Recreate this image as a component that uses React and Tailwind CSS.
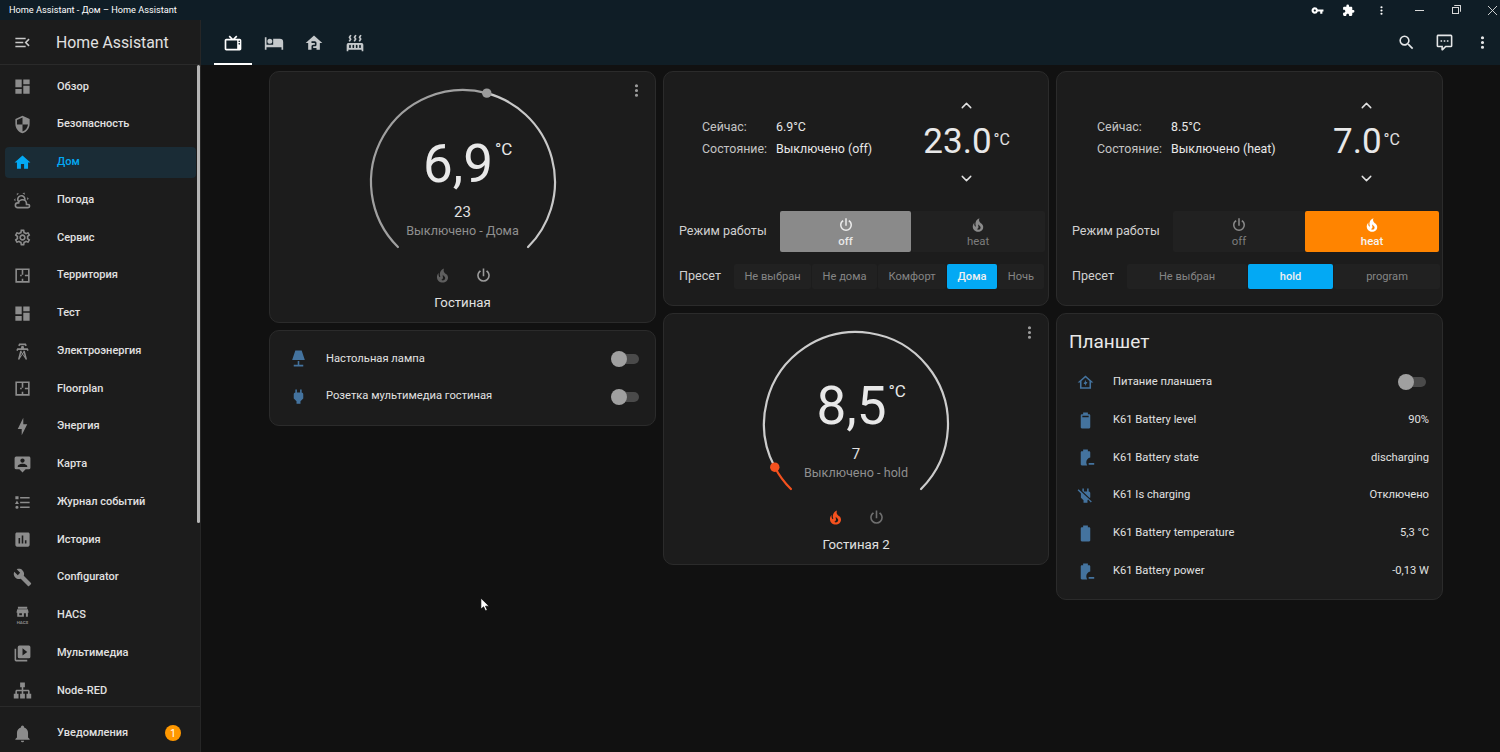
import { ChevronUp, ChevronDown } from "lucide-react";
import { MdOutlineSettings, MdVpnKey } from "react-icons/md";

const paths = {
  menuOpen: "M21,15.61L19.59,17L14.58,12L19.59,7L21,8.39L17.44,12L21,15.61M3,6H16V8H3V6M3,13V11H13V13H3M3,18V16H16V18H3Z",
  dashboard: "M13,3V9H21V3M13,21H21V11H13M3,21H11V15H3M3,13H11V3H3V13Z",
  security: "M12,12H19C18.47,16.11 15.72,19.78 12,20.92V12H5V6.3L12,3.19M12,1L3,5V11C3,16.55 6.84,21.73 12,23C17.16,21.73 21,16.55 21,11V5L12,1Z",
  home: "M10,20V14H14V20H19V12H22L12,3L2,12H5V20H10Z",
  weather: "M12.74,5.47C15.1,6.5 16.35,9.03 15.92,11.46C17.19,12.56 18,14.19 18,16V16.17C18.31,16.06 18.65,16 19,16A3,3 0 0,1 22,19A3,3 0 0,1 19,22H6A4,4 0 0,1 2,18A4,4 0 0,1 6,14H6.27C5,12.45 4.6,10.24 5.5,8.26C6.72,5.5 9.97,4.24 12.74,5.47M11.93,7.3C10.16,6.5 8.09,7.31 7.31,9.07C6.85,10.09 6.93,11.22 7.41,12.13C8.5,10.83 10.16,10 12,10C12.7,10 13.38,10.12 14,10.34C13.94,9.06 13.18,7.86 11.93,7.3M13.55,3.64C13,3.4 12.45,3.23 11.88,3.12L14.37,1.82L15.27,4.71C14.76,4.29 14.19,3.93 13.55,3.64M6.09,4.44C5.6,4.79 5.17,5.19 4.8,5.63L4.91,2.82L7.87,3.5C7.25,3.71 6.65,4.03 6.09,4.44M18,9.71C17.91,9.12 17.78,8.55 17.59,8L19.97,9.5L17.92,11.73C18.03,11.08 18.05,10.4 18,9.71M3.04,11.3C3.11,11.9 3.24,12.47 3.43,13L1.06,11.5L3.1,9.28C3,9.93 2.97,10.61 3.04,11.3M19,18H16V16A4,4 0 0,0 12,12A4,4 0 0,0 8,16H6A2,2 0 0,0 4,18A2,2 0 0,0 6,20H19A1,1 0 0,0 20,19A1,1 0 0,0 19,18Z",
  floorplan: "M3,3H21V21H3V3M5,5V19H11V16H13V19H19V13H15V11H19V5H13V11H11V13H9V11H11V5H5Z",
  tower: "M8.28,5.45L6.5,4.55L7.76,2H16.23L17.5,4.55L15.72,5.44L15,4H9L8.28,5.45M18.62,8H14.09L13.3,5H10.7L9.91,8H5.38L4.1,10.55L5.89,11.44L6.62,10H17.38L18.1,11.45L19.89,10.56L18.62,8M17.77,22H15.7L15.46,21.1L12,15.9L8.53,21.1L8.3,22H6.23L9.12,11H11.19L10.83,12.35L12,14.1L13.16,12.35L12.81,11H14.88L17.77,22M11.4,15L10.5,13.65L9.32,18.13L11.4,15M14.68,18.12L13.5,13.64L12.6,15L14.68,18.12Z",
  bolt: "M11,15H6L13,1V9H18L11,23V15Z",
  tooltip: "M20,2H4A2,2 0 0,0 2,4V16A2,2 0 0,0 4,18H8L12,22L16,18H20A2,2 0 0,0 22,16V4C22,2.89 21.1,2 20,2M12,4.3C13.5,4.3 14.7,5.5 14.7,7C14.7,8.5 13.5,9.7 12,9.7C10.5,9.7 9.3,8.5 9.3,7C9.3,5.5 10.5,4.3 12,4.3M18,15H6V14.1C6,12.1 10,11 12,11C14,11 18,12.1 18,14.1V15Z",
  list: "M5,9.5L7.5,14H2.5L5,9.5M3,4H7V8H3V4M5,20A2,2 0 0,0 7,18A2,2 0 0,0 5,16A2,2 0 0,0 3,18A2,2 0 0,0 5,20M9,5V7H21V5H9M9,19H21V17H9V19M9,13H21V11H9V13Z",
  chart: "M9,17H7V10H9V17M13,17H11V7H13V17M17,17H15V13H17V17M19,3H5C3.9,3 3,3.9 3,5V19C3,20.1 3.9,21 5,21H19C20.1,21 21,20.1 21,19V5C21,3.9 20.1,3 19,3Z",
  wrench: "M22.7,19L13.6,9.9C14.5,7.6 14,4.9 12.1,3C10.1,1 7.1,0.6 4.7,1.7L9,6L6,9L1.6,4.7C0.4,7.1 0.9,10.1 2.9,12.1C4.8,14 7.5,14.5 9.8,13.6L18.9,22.7C19.3,23.1 19.9,23.1 20.3,22.7L22.6,20.4C23.1,20 23.1,19.3 22.7,19Z",
  store: "M5,1H19V4H5V1M4,5H20L21,9V10H20V16H4V10H3V9L4,5M7,11V14H11V11H7M14,11V16H17V11H14Z",
  media: "M4,6H2V20A2,2 0 0,0 4,22H18V20H4V6M20,2H8A2,2 0 0,0 6,4V16A2,2 0 0,0 8,18H20A2,2 0 0,0 22,16V4A2,2 0 0,0 20,2M12,14.5V5.5L18,10L12,14.5Z",
  sitemap: "M9,2V8H11V11H5C3.89,11 3,11.89 3,13V16H1V22H7V16H5V13H11V16H9V22H15V16H13V13H19V16H17V22H23V16H21V13C21,11.89 20.11,11 19,11H13V8H15V2H9Z",
  bell: "M21,19V20H3V19L5,17V11C5,7.9 7.03,5.17 10,4.29C10,4.19 10,4.1 10,4A2,2 0 0,1 12,2A2,2 0 0,1 14,4C14,4.1 14,4.19 14,4.29C16.97,5.17 19,7.9 19,11V17L21,19M14,21A2,2 0 0,1 12,23A2,2 0 0,1 10,21",
  tv: "M8.16,3L6.75,4.41L9.34,7H4C2.89,7 2,7.89 2,9V19C2,20.11 2.89,21 4,21H20C21.11,21 22,20.11 22,19V9C22,7.89 21.11,7 20,7H14.66L17.25,4.41L15.84,3L12,6.84L8.16,3M4,9H17V19H4V9M19.5,9A1,1 0 0,1 20.5,10A1,1 0 0,1 19.5,11A1,1 0 0,1 18.5,10A1,1 0 0,1 19.5,9M19.5,12A1,1 0 0,1 20.5,13A1,1 0 0,1 19.5,14A1,1 0 0,1 18.5,13A1,1 0 0,1 19.5,12Z",
  bed: "M19,7H11V14H3V5H1V20H3V17H21V20H23V11A4,4 0 0,0 19,7M7,13A3,3 0 0,0 10,10A3,3 0 0,0 7,7A3,3 0 0,0 4,10A3,3 0 0,0 7,13Z",
  homeFloor: "M12,3L2,12H5V20H19V12H22L12,3M9,10H13C14.1,10 15,10.9 15,12V14C15,15.1 14.1,16 13,16H11V18H15V20H9V16C9,14.9 9.9,14 11,14H13V12H9V10Z",
  radiator: "M7.95,3L6.53,5.19L7.95,7.4H7.94L5.95,10.5L4.22,9.6L5.64,7.39L4.22,5.19L6.22,2.09L7.95,3M13.95,2.89L12.53,5.1L13.95,7.3L13.94,7.31L11.95,10.4L10.22,9.5L11.64,7.3L10.22,5.1L12.22,2L13.95,2.89M20,2.89L18.56,5.1L20,7.3V7.31L18,10.4L16.25,9.5L17.67,7.3L16.25,5.1L18.25,2L20,2.89M2,22V14A2,2 0 0,1 4,12H20A2,2 0 0,1 22,14V22H20V20H4V22H2M6,14A1,1 0 0,0 5,15V17A1,1 0 0,0 6,18A1,1 0 0,0 7,17V15A1,1 0 0,0 6,14M10,14A1,1 0 0,0 9,15V17A1,1 0 0,0 10,18A1,1 0 0,0 11,17V15A1,1 0 0,0 10,14M14,14A1,1 0 0,0 13,15V17A1,1 0 0,0 14,18A1,1 0 0,0 15,17V15A1,1 0 0,0 14,14M18,14A1,1 0 0,0 17,15V17A1,1 0 0,0 18,18A1,1 0 0,0 19,17V15A1,1 0 0,0 18,14Z",
  search: "M9.5,3A6.5,6.5 0 0,1 16,9.5C16,11.11 15.41,12.59 14.44,13.73L14.71,14H15.5L20.5,19L19,20.5L14,15.5V14.71L13.73,14.44C12.59,15.41 11.11,16 9.5,16A6.5,6.5 0 0,1 3,9.5A6.5,6.5 0 0,1 9.5,3M9.5,5C7,5 5,7 5,9.5C5,12 7,14 9.5,14C12,14 14,12 14,9.5C14,7 12,5 9.5,5Z",
  comment: "M9,22A1,1 0 0,1 8,21V18H4A2,2 0 0,1 2,16V4C2,2.89 2.9,2 4,2H20A2,2 0 0,1 22,4V16A2,2 0 0,1 20,18H13.9L10.2,21.71C10,21.9 9.75,22 9.5,22H9M10,16V19.08L13.08,16H20V4H4V16H10M17,11H15V9H17V11M13,11H11V9H13V11M9,11H7V9H9V11Z",
  dots: "M12,16A2,2 0 0,1 14,18A2,2 0 0,1 12,20A2,2 0 0,1 10,18A2,2 0 0,1 12,16M12,10A2,2 0 0,1 14,12A2,2 0 0,1 12,14A2,2 0 0,1 10,12A2,2 0 0,1 12,10M12,4A2,2 0 0,1 14,6A2,2 0 0,1 12,8A2,2 0 0,1 10,6A2,2 0 0,1 12,4Z",
  fire: "M17.66,11.2C17.43,10.9 17.15,10.64 16.89,10.38C16.22,9.78 15.46,9.35 14.82,8.72C13.33,7.26 13,4.85 13.95,3C13,3.23 12.17,3.75 11.46,4.32C8.87,6.4 7.85,10.07 9.07,13.22C9.11,13.32 9.15,13.42 9.15,13.55C9.15,13.77 9,13.97 8.8,14.05C8.57,14.15 8.33,14.09 8.14,13.93C8.08,13.88 8.04,13.83 8,13.76C6.87,12.33 6.69,10.28 7.45,8.64C5.78,10 4.87,12.3 5,14.47C5.06,14.97 5.12,15.47 5.29,15.97C5.43,16.57 5.7,17.17 6,17.7C7.08,19.43 8.95,20.67 10.96,20.92C13.1,21.19 15.39,20.8 17.03,19.32C18.86,17.66 19.5,15 18.56,12.72L18.43,12.46C18.22,12 17.66,11.2 17.66,11.2M14.5,17.5C14.22,17.74 13.76,18 13.4,18.1C12.28,18.5 11.16,17.94 10.5,17.28C11.69,17 12.4,16.12 12.61,15.23C12.78,14.43 12.46,13.77 12.33,13C12.21,12.26 12.23,11.63 12.5,10.94C12.69,11.32 12.89,11.7 13.13,12C13.9,13 15.11,13.44 15.37,14.8C15.41,14.94 15.43,15.08 15.43,15.23C15.46,16.05 15.1,16.95 14.5,17.5Z",
  power: "M16.56,5.44L15.11,6.89C16.84,7.94 18,9.83 18,12A6,6 0 0,1 12,18A6,6 0 0,1 6,12C6,9.83 7.16,7.94 8.88,6.88L7.44,5.44C5.36,6.88 4,9.28 4,12A8,8 0 0,0 12,20A8,8 0 0,0 20,12C20,9.28 18.64,6.88 16.56,5.44M13,3H11V13H13",
  lamp: "M8,2H16L20,14H4L8,2M11,15H13V20H18V22H6V20H11V15Z",
  plug: "M16,7V3H14V7H10V3H8V7C7,7 6,8 6,9V14.5L9.5,18V21H14.5V18L18,14.5V9C18,8 17,7 16,7Z",
  plugOff: "M8,3V6.18L17.2,15.3L18,14.4V8.8C18,7.68 16.7,7 16,7V3H14V7H10V3H8M3.28,4L2,5.28L6.2,9.5V14.8L9.5,18V21H14.5V18L15.3,17.2L18.72,20.72L20,19.45L3.28,4Z",
  battery90: "M16.67,4H15V2H9V4H7.33A1.33,1.33 0 0,0 6,5.33V20.67C6,21.4 6.6,22 7.33,22H16.67A1.33,1.33 0 0,0 18,20.67V5.33C18,4.6 17.4,4 16.67,4M16,8H8V6H16",
  battery: "M16.67,4H15V2H9V4H7.33A1.33,1.33 0 0,0 6,5.33V20.66C6,21.4 6.6,22 7.33,22H16.67C17.4,22 18,21.4 18,20.67V5.33C18,4.6 17.4,4 16.67,4Z",
  batteryMinus: "M6,5.33C6,4.6 6.6,4 7.33,4H9V2H15V4H16.67C17.4,4 18,4.6 18,5.33V12C15.2,12.5 13,15 13,18C13,19.6 13.5,21 14.2,22H7.33C6.6,22 6,21.4 6,20.67V5.33M16,19H23V21H16V19Z",
  homeBolt: "M12,3L2,12H5V20H19V12H22L12,3M7,18V10.2L12,5.7L17,10.2V18H7M12.5,8.5L9.5,14H11.5V16.5L14.5,11.5H12.5V8.5Z",
  puzzle: "M20.5,11H19V7C19,5.89 18.1,5 17,5H13V3.5A2.5,2.5 0 0,0 10.5,1A2.5,2.5 0 0,0 8,3.5V5H4A2,2 0 0,0 2,7V10.8H3.5C5,10.8 6.2,12 6.2,13.5C6.2,15 5,16.2 3.5,16.2H2V20A2,2 0 0,0 4,22H7.8V20.5C7.8,19 9,17.8 10.5,17.8C12,17.8 13.2,19 13.2,20.5V22H17A2,2 0 0,0 19,20V16H20.5A2.5,2.5 0 0,0 23,13.5A2.5,2.5 0 0,0 20.5,11Z",
};

const Mdi = ({ name, className = "size-[19px]" }) => (
  <svg viewBox="0 0 24 24" fill="currentColor" fillRule="evenodd" className={`shrink-0 ${className}`}>
    <path d={paths[name]} />
  </svg>
);

const HacsIcon = () => (
  <svg viewBox="0 0 24 24" fill="currentColor" className="size-[19px] shrink-0">
    <path d={paths.store} transform="translate(2 0) scale(0.84)" />
    <text x="12" y="22.5" textAnchor="middle" fontSize="5.5" fontWeight="700" fontFamily="Roboto">
      HACS
    </text>
  </svg>
);

const navItems = [
  { icon: "dashboard", label: "Обзор" },
  { icon: "security", label: "Безопасность" },
  { icon: "home", label: "Дом", active: true },
  { icon: "weather", label: "Погода" },
  { icon: "cog", label: "Сервис" },
  { icon: "floorplan", label: "Территория" },
  { icon: "dashboard", label: "Тест" },
  { icon: "tower", label: "Электроэнергия" },
  { icon: "floorplan", label: "Floorplan" },
  { icon: "bolt", label: "Энергия" },
  { icon: "tooltip", label: "Карта" },
  { icon: "list", label: "Журнал событий" },
  { icon: "chart", label: "История" },
  { icon: "wrench", label: "Configurator" },
  { icon: "hacs", label: "HACS" },
  { icon: "media", label: "Мультимедиа" },
  { icon: "sitemap", label: "Node-RED" },
];

const NavRow = ({ icon, label, active }) => (
  <div className="flex h-[37.75px] items-center">
    <div
      className={`ml-[5px] flex h-[31px] w-[191px] items-center rounded-[4px] pl-[7.5px] ${
        active ? "bg-[#1a2c36] text-[#03a9f4]" : "text-[#8c8c8c]"
      }`}
    >
      {icon === "cog" ? (
        <MdOutlineSettings className="size-[19px] shrink-0" />
      ) : icon === "hacs" ? (
        <HacsIcon />
      ) : (
        <Mdi name={icon} />
      )}
      <span className={`ml-[25.5px] text-[11px] font-medium ${active ? "text-[#03a9f4]" : "text-[#e1e1e1]"}`}>
        {label}
      </span>
    </div>
  </div>
);

const Sidebar = () => (
  <aside className="relative flex w-[201px] shrink-0 flex-col border-r border-[#262626] bg-[#1c1c1c]">
    <div className="flex h-[45px] shrink-0 items-center border-b border-[#2a2a2a] pl-[12.5px] pt-[1px] text-[#c8c8c8]">
      <Mdi name="menuOpen" />
      <span className="ml-[24.5px] text-[15.8px] text-[#e1e1e1]">Home Assistant</span>
    </div>
    <div className="h-[641px] shrink-0 overflow-hidden pt-[3px]">
      {navItems.map((item) => (
        <NavRow key={item.label} {...item} />
      ))}
    </div>
    <div className="flex flex-1 items-center border-t border-[#2a2a2a] pl-[12.5px] pt-[7px] text-[#8c8c8c]">
      <Mdi name="bell" />
      <span className="ml-[25.5px] text-[11px] font-medium text-[#e1e1e1]">Уведомления</span>
      <span className="ml-[37px] flex size-4 items-center justify-center rounded-full bg-[#ff9800] text-[10px] text-white">
        1
      </span>
    </div>
    <div className="absolute left-[197px] top-[45px] h-[458px] w-[3px] rounded-full bg-[#b5b5b5]" />
  </aside>
);

const Card = ({ className = "", children }) => (
  <div className={`relative rounded-[10px] border border-[#2b2b2b] bg-[#1c1c1c] ${className}`}>{children}</div>
);

// arc helpers, angle in degrees clockwise from the top
const point = (angle) => {
  const rad = (angle * Math.PI) / 180;
  return [100 + 92 * Math.sin(rad), 100 - 92 * Math.cos(rad)];
};
const arc = (from, to) => {
  const [x1, y1] = point(from);
  const [x2, y2] = point(to);
  return `M${x1} ${y1}A92 92 0 ${to - from > 180 ? 1 : 0} 1 ${x2} ${y2}`;
};

const Dial = ({ value, target, state, handle, activeColor, restColor, handleColor, fireColor, powerColor, name }) => {
  const [hx, hy] = point(handle);
  return (
    <div className="flex flex-col items-center pt-[10px]">
      <div className="relative h-[170px] w-[200px]">
        <svg viewBox="0 0 200 170" className="h-[170px] w-[200px]" fill="none" strokeLinecap="round">
          <path d={arc(-135, handle)} stroke={activeColor} strokeWidth="2.2" />
          <path d={arc(handle, 135)} stroke={restColor} strokeWidth="2.2" />
          <circle cx={hx} cy={hy} r="4.7" fill={handleColor} />
        </svg>
        <div className="absolute inset-0 flex flex-col items-center pt-[52px]">
          <div className="relative -ml-[9px] text-[53px] leading-[60px] text-[#e8e8e8]">
            {value}
            <span className="absolute left-full top-[5px] ml-[2px] text-[17px] leading-5">°C</span>
          </div>
          <div className="mt-[8px] text-[15px] leading-5 text-[#e1e1e1]">{target}</div>
          <div className="mt-[1px] text-[12.6px] leading-[16px] text-[#8f8f8f]">{state}</div>
        </div>
      </div>
      <div className="mt-[14px] flex items-center gap-[22px]">
        <Mdi name="fire" className={`size-[19px] ${fireColor}`} />
        <Mdi name="power" className={`size-[19px] ${powerColor}`} />
      </div>
      <div className="mt-[8px] text-[13.2px] leading-5 text-[#e1e1e1]">{name}</div>
      <div className="absolute right-[9px] top-[9px] text-[#9b9b9b]">
        <Mdi name="dots" />
      </div>
    </div>
  );
};

const ModeButton = ({ icon, label, className, iconColor }) => (
  <div className={`flex h-[41px] flex-col items-center justify-center rounded-[2px] ${className}`}>
    <Mdi name={icon} className={`size-[18px] ${iconColor}`} />
    <span className="text-[11.4px] leading-[14px]">{label}</span>
  </div>
);

const Thermostat = ({ now, state, temp, infoPad, tempPad, offActive, presets }) => (
  <Card className="flex h-[235px] flex-col">
    <div className="flex h-[139px] items-center justify-between">
      <div className={`grid grid-cols-[74px_auto] gap-y-[5px] pb-[8px] text-[12.4px] leading-[17px] ${infoPad}`}>
        <span className="text-[#c4c4c4]">Сейчас:</span>
        <span className="text-[#e8e8e8]">{now}</span>
        <span className="text-[#c4c4c4]">Состояние:</span>
        <span className="text-[#e8e8e8]">{state}</span>
      </div>
      <div className={`flex flex-col items-center pt-[1px] ${tempPad}`}>
        <ChevronUp className="size-[17px] text-[#e1e1e1]" />
        <div className="my-[9px] flex h-[38px] items-start">
          <span className="text-[35px] leading-[37px] text-[#e8e8e8]">{temp}</span>
          <span className="ml-[2px] mt-[7px] text-[16px] leading-5 text-[#e1e1e1]">°C</span>
        </div>
        <ChevronDown className="size-[17px] text-[#e1e1e1]" />
      </div>
    </div>
    <div className="flex items-center pl-[15px] pr-[3px]">
      <span className="w-[101px] shrink-0 text-[12.6px] text-[#d0d0d0]">Режим работы</span>
      <div className="flex flex-1">
        <ModeButton
          icon="power"
          label="off"
          className={offActive ? "w-[131px] shrink-0 bg-[#8a8a8a] font-medium text-[#e8e8e8]" : "w-[132px] shrink-0 bg-[#212121] text-[#7d7d7d]"}
          iconColor={offActive ? "text-[#ececec]" : "text-[#8a8a8a]"}
        />
        <ModeButton
          icon="fire"
          label="heat"
          className={offActive ? "flex-1 bg-[#212121] text-[#7d7d7d]" : "flex-1 bg-[#ff8400] font-medium text-[#f5f5f5]"}
          iconColor={offActive ? "text-[#8a8a8a]" : "text-white"}
        />
      </div>
    </div>
    <div className="mt-[12px] flex items-center pl-[15px] pr-[3px]">
      <span className="w-[55px] shrink-0 text-[12.6px] text-[#d0d0d0]">Пресет</span>
      <div className="flex flex-1 gap-[1px]">
        {presets.map((p) => (
          <div
            key={p.label}
            className={`flex h-[25px] items-center justify-center rounded-[2px] pt-[1px] text-[11.1px] ${p.width} ${
              p.active ? "bg-[#03a9f4] font-medium text-[#f0f0f0]" : "bg-[#212121] text-[#858585]"
            }`}
          >
            {p.label}
          </div>
        ))}
      </div>
    </div>
  </Card>
);

const Toggle = () => (
  <div className="relative mr-[3px] h-[10px] w-[25px] rounded-full bg-[#4a4a4a]">
    <div className="absolute -left-[3px] -top-[3px] size-4 rounded-full bg-[#a0a0a0]" />
  </div>
);

const EntityRow = ({ icon, label, value, toggle }) => (
  <div className="flex h-[37.8px] items-center pl-[19px] pr-[13px]">
    <Mdi name={icon} className="size-[19px] text-[#44739e]" />
    <span className="ml-[18px] flex-1 text-[11.2px] text-[#e1e1e1]">{label}</span>
    {toggle ? <Toggle /> : <span className="text-[11.2px] text-[#e1e1e1]">{value}</span>}
  </div>
);

const tabs = ["tv", "bed", "homeFloor", "radiator"];

const TopBar = () => (
  <header className="flex h-[45px] shrink-0 bg-[#101e26] pl-[13px] pr-[8.5px]">
    <div className="flex gap-[2.6px]">
      {tabs.map((t, i) => (
        <div
          key={t}
          className={`flex w-[38px] items-center justify-center border-b-2 pt-[2px] ${
            i === 0 ? "border-white text-white" : "border-transparent text-[#c4c8ca]"
          }`}
        >
          <Mdi name={t} className="size-[20px]" />
        </div>
      ))}
    </div>
    <div className="ml-auto flex items-center gap-[19px] text-[#e4e6e7]">
      <Mdi name="search" />
      <Mdi name="comment" />
      <Mdi name="dots" />
    </div>
  </header>
);

const TitleBar = () => (
  <div className="flex h-5 shrink-0 items-center bg-[#0f1d26] pl-[9px] text-[9.2px] text-white">
    <span>Home Assistant - Дом – Home Assistant</span>
    <div className="ml-auto flex items-center text-white">
      <MdVpnKey className="size-[13px]" />
      <Mdi name="puzzle" className="ml-[18px] size-[13px]" />
      <Mdi name="dots" className="ml-[20px] size-[13px]" />
      <div className="ml-[27px] h-px w-[9px] bg-[#d8d8d8]" />
      <div className="relative ml-[28px] h-[7px] w-[7px] border border-[#d8d8d8]">
        <div className="absolute -right-[3px] -top-[3px] h-[7px] w-[7px] rounded-[1px] border-r border-t border-[#d8d8d8]" />
      </div>
      <svg viewBox="0 0 10 10" className="ml-[29px] mr-[3px] size-[9px]" stroke="#e0e0e0" strokeWidth="1">
        <path d="M0 0L10 10M10 0L0 10" />
      </svg>
    </div>
  </div>
);

const Cursor = () => (
  <svg viewBox="0 0 11 16" className="absolute left-[279px] top-[577px] h-[15px] w-[10px]">
    <path d="M1 1V13L4 10.5L6 15L8 14L6 9.8H10L1 1Z" fill="#fff" stroke="#000" strokeWidth="0.7" />
  </svg>
);

export default function App() {
  return (
    <div className="flex h-[752px] w-[1500px] flex-col overflow-hidden bg-[#111111] font-[Roboto,sans-serif]">
      <TitleBar />
      <div className="flex flex-1">
        <Sidebar />
        <div className="relative flex flex-1 flex-col">
          <TopBar />
          <main className="flex gap-[7px] pl-[68px] pt-[6px]">
            <div className="flex w-[387px] flex-col gap-[7px]">
              <Card className="h-[252px]">
                <Dial
                  value="6,9"
                  target="23"
                  state="Выключено - Дома"
                  handle={15}
                  activeColor="#a0a0a0"
                  restColor="#c8c8c8"
                  handleColor="#9b9b9b"
                  fireColor="text-[#5f5f5f]"
                  powerColor="text-[#9b9b9b]"
                  name="Гостиная"
                />
              </Card>
              <Card className="h-[96px] pt-[9px]">
                <EntityRow icon="lamp" label="Настольная лампа" toggle />
                <EntityRow icon="plug" label="Розетка мультимедиа гостиная" toggle />
              </Card>
            </div>
            <div className="flex w-[386px] flex-col gap-[7px]">
              <Thermostat
                now="6.9°C"
                state="Выключено (off)"
                temp="23.0"
                infoPad="pl-[38px]"
                tempPad="pr-[38px]"
                offActive
                presets={[
                  { label: "Не выбран", width: "w-[77px]" },
                  { label: "Не дома", width: "w-[65px]" },
                  { label: "Комфорт", width: "w-[68px]" },
                  { label: "Дома", width: "w-[50px]", active: true },
                  { label: "Ночь", width: "w-[46px]" },
                ]}
              />
              <Card className="h-[252px]">
                <Dial
                  value="8,5"
                  target="7"
                  state="Выключено - hold"
                  handle={-118}
                  activeColor="#f4511e"
                  restColor="#cccccc"
                  handleColor="#f4511e"
                  fireColor="text-[#f4511e]"
                  powerColor="text-[#6f6f6f]"
                  name="Гостиная 2"
                />
              </Card>
            </div>
            <div className="flex w-[387px] flex-col gap-[7px]">
              <Thermostat
                now="8.5°C"
                state="Выключено (heat)"
                temp="7.0"
                infoPad="pl-[40px]"
                tempPad="pr-[42px]"
                presets={[
                  { label: "Не выбран", width: "w-[120px]" },
                  { label: "hold", width: "w-[85px]", active: true },
                  { label: "program", width: "w-[106px]" },
                ]}
              />
              <Card className="h-[287px]">
                <div className="flex h-[49.5px] items-end pb-[10px] pl-[12px] text-[19px] leading-6 text-[#e8e8e8]">
                  Планшет
                </div>
                <EntityRow icon="homeBolt" label="Питание планшета" toggle />
                <EntityRow icon="battery90" label="K61 Battery level" value="90%" />
                <EntityRow icon="batteryMinus" label="K61 Battery state" value="discharging" />
                <EntityRow icon="plugOff" label="K61 Is charging" value="Отключено" />
                <EntityRow icon="battery" label="K61 Battery temperature" value="5,3 °C" />
                <EntityRow icon="batteryMinus" label="K61 Battery power" value="-0,13 W" />
              </Card>
            </div>
          </main>
          <Cursor />
        </div>
      </div>
    </div>
  );
}
